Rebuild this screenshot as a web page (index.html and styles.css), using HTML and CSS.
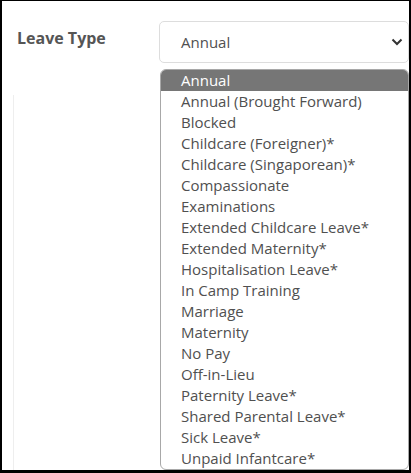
FILE: index.html
```html
<!DOCTYPE html>
<html>
<head>
<meta charset="utf-8">
<link rel="stylesheet" href="styles.css">
</head>
<body>
<div class="frame">
  <div class="row">
    <div class="label">Leave Type</div>
    <div class="select">
      <span>Annual</span>
      <svg class="chev" width="12" height="8" viewBox="0 0 12 8"><path d="M1.5 1.5 L6 6 L10.5 1.5" fill="none" stroke="#333" stroke-width="2"/></svg>
    </div>
  </div>
  <div class="panel"></div>
  <ul class="menu">
    <li class="active">Annual</li>
    <li>Annual (Brought Forward)</li>
    <li>Blocked</li>
    <li>Childcare (Foreigner)*</li>
    <li>Childcare (Singaporean)*</li>
    <li>Compassionate</li>
    <li>Examinations</li>
    <li>Extended Childcare Leave*</li>
    <li>Extended Maternity*</li>
    <li>Hospitalisation Leave*</li>
    <li>In Camp Training</li>
    <li>Marriage</li>
    <li>Maternity</li>
    <li>No Pay</li>
    <li>Off-in-Lieu</li>
    <li>Paternity Leave*</li>
    <li>Shared Parental Leave*</li>
    <li>Sick Leave*</li>
    <li>Unpaid Infantcare*</li>
  </ul>
</div>
</body>
</html>
```

FILE: styles.css
```css
html, body {
  margin: 0;
  padding: 0;
  background: #fff;
}
body {
  width: 411px;
  height: 473px;
  overflow: hidden;
  font-family: "Open Sans", "Noto Sans", sans-serif;
}
.frame {
  box-sizing: border-box;
  width: 411px;
  height: 473px;
  border-top: 1px solid #000;
  border-left: 2px solid #000;
  border-right: 2px solid #000;
  border-bottom: 3px solid #000;
  position: relative;
  display: flex;
  flex-direction: column;
}
.row {
  display: grid;
  grid-template-columns: 157px 1fr;
  padding: 20px 0 0 0;
}
.label {
  padding-left: 15px;
  padding-top: 6px;
  font-weight: bold;
  font-size: 16px;
  color: #555;
}
.select {
  box-sizing: border-box;
  height: 42px;
  border: 1px solid #ddd;
  border-radius: 5px;
  display: flex;
  align-items: center;
  justify-content: space-between;
  padding: 0 5px 0 21px;
  font-size: 15px;
  color: #505050;
}
.chev {
  display: block;
}
.panel {
  flex: 1;
  margin: 32px 0 0 11px;
  width: 150px;
  border-left: 1px solid #eee;
  border-right: 1px solid #e8e8e8;
}
.menu {
  position: absolute;
  left: 158px;
  top: 68px;
  width: 249px;
  box-sizing: border-box;
  margin: 0;
  padding: 0;
  list-style: none;
  background: #fff;
  border: 1px solid #a8a8a8;
  border-radius: 6px;
  overflow: hidden;
  font-size: 15px;
  color: #505050;
}
.menu li {
  height: 21px;
  line-height: 21px;
  padding-left: 20px;
  white-space: nowrap;
}
.menu li.active {
  background: #767676;
  color: #fff;
}
```
